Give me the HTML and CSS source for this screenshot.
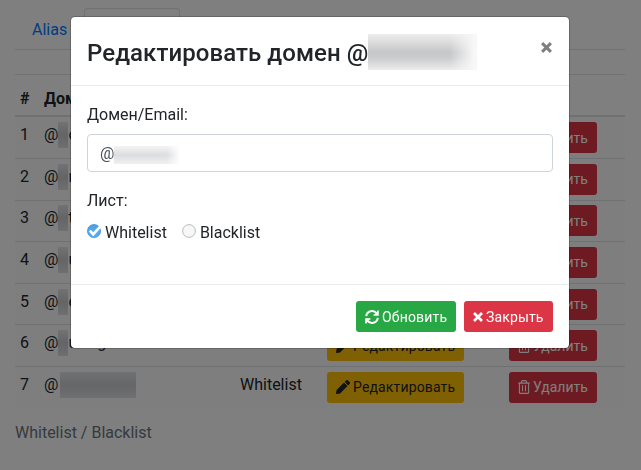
FILE: index.html
```html
<!DOCTYPE html>
<html lang="ru">
<head>
<meta charset="utf-8">
<title>Whitelist / Blacklist</title>
<link rel="stylesheet" href="styles.css">
</head>
<body>
<svg class="defs" aria-hidden="true">
  <symbol id="pencil" viewBox="0 0 512 512"><path fill="currentColor" d="M498 142l-46 46c-5 5-12 5-17 0L324 77c-5-5-5-12 0-17l46-46c19-19 49-19 68 0l60 60c19 19 19 49 0 68zM284 100L22 362 .4 484c-3 16 11 30 28 28L150 490l262-262c5-5 5-12 0-17L301 100c-5-5-13-5-17 0z"/></symbol>
  <symbol id="trash" viewBox="0 0 12 14"><path fill="none" stroke="currentColor" stroke-width="1.1" d="M.3 3.1h11.4M3.3 3V1.8L4.5.6h3l1.2 1.2V3M1.4 3.3v9.1q0 1 1 1h7.2q1 0 1-1V3.3M4.5 5.3v6M7.5 5.3v6"/></symbol>
  <symbol id="sync" viewBox="0 0 14 14"><path fill="none" stroke="currentColor" stroke-width="2" d="M1.2 6.2A5.8 5.8 0 0 1 11.7 3.6M12.8 7.8A5.8 5.8 0 0 1 2.3 10.4"/><path fill="currentColor" d="M13.8.5v5.3H8.5V4.6l2.1-.5L12.4.5zM.2 13.5V8.2h5.3v1.2l-2.1.5-1.8 3.6z"/></symbol>
  <symbol id="times" viewBox="0 0 10 10"><path fill="none" stroke="currentColor" stroke-width="2.7" d="M1 1l8 8M9 1L1 9"/></symbol>
</svg>

<main class="page">
  <nav class="tabs"><a class="tab">Alias</a><a class="tab tab-active"></a></nav>
  <hr class="rule">
  <table class="table">
    <colgroup><col class="c-num"><col class="c-domain"><col class="c-list"><col class="c-edit"><col class="c-del"></colgroup>
    <thead><tr><th>#</th><th>Домен</th><th></th><th></th><th></th></tr></thead>
    <tbody>
      <tr><td>1</td><td>@<span class="mask"></span>o</td><td></td><td><button class="btn warning"><svg class="icon"><use href="#pencil"/></svg></button></td><td><button class="btn danger remove"><svg class="icon trash"><use href="#trash"/></svg><span>Удалить</span></button></td></tr>
      <tr><td>2</td><td>@<span class="mask"></span>n</td><td></td><td><button class="btn warning"><svg class="icon"><use href="#pencil"/></svg></button></td><td><button class="btn danger remove"><svg class="icon trash"><use href="#trash"/></svg><span>Удалить</span></button></td></tr>
      <tr><td>3</td><td>@<span class="mask"></span>t</td><td></td><td><button class="btn warning"><svg class="icon"><use href="#pencil"/></svg></button></td><td><button class="btn danger remove"><svg class="icon trash"><use href="#trash"/></svg><span>Удалить</span></button></td></tr>
      <tr><td>4</td><td>@<span class="mask"></span>u</td><td></td><td><button class="btn warning"><svg class="icon"><use href="#pencil"/></svg></button></td><td><button class="btn danger remove"><svg class="icon trash"><use href="#trash"/></svg><span>Удалить</span></button></td></tr>
      <tr><td>5</td><td>@<span class="mask"></span>e</td><td></td><td><button class="btn warning"><svg class="icon"><use href="#pencil"/></svg></button></td><td><button class="btn danger remove"><svg class="icon trash"><use href="#trash"/></svg><span>Удалить</span></button></td></tr>
      <tr><td>6</td><td>@<span class="mask"></span>u<span class="tail">g</span></td><td></td><td><button class="btn warning"><svg class="icon"><use href="#pencil"/></svg><span>Редактировать</span></button></td><td><button class="btn danger remove"><svg class="icon trash"><use href="#trash"/></svg><span>Удалить</span></button></td></tr>
      <tr><td>7</td><td>@<span class="mask mask-long"></span></td><td>Whitelist</td><td><button class="btn warning"><svg class="icon"><use href="#pencil"/></svg><span>Редактировать</span></button></td><td><button class="btn danger remove"><svg class="icon trash"><use href="#trash"/></svg><span>Удалить</span></button></td></tr>
    </tbody>
  </table>
  <p class="caption">Whitelist / Blacklist</p>
</main>

<div class="backdrop">
  <section class="modal">
    <header class="modal-header">
      <h5 class="title">Редактировать домен @<span class="title-mask"></span></h5>
      <button class="close" aria-label="Закрыть"><svg class="icon-close"><use href="#times"/></svg></button>
    </header>
    <div class="modal-body">
      <label class="label">Домен/Email:</label>
      <div class="input">@<span class="input-mask"></span></div>
      <label class="label">Лист:</label>
      <div class="radios">
        <label class="radio"><svg class="dot" viewBox="0 0 14 14"><defs><linearGradient id="blue" x2="0" y2="1"><stop stop-color="#4b9fe6"/><stop offset="1" stop-color="#55b0ff"/></linearGradient></defs><circle cx="7" cy="7" r="6.6" fill="url(#blue)" stroke="#438fce" stroke-width=".7"/><path d="M2.8 6.6l3.4 3.6 6.8-7.4" fill="none" stroke="#fff" stroke-width="2.7"/></svg><span>Whitelist</span></label>
        <label class="radio"><svg class="dot" viewBox="0 0 14 14"><circle cx="7" cy="7" r="6.4" fill="#f7f7f7" stroke="#bbb" stroke-width="1"/></svg><span>Blacklist</span></label>
      </div>
    </div>
    <footer class="modal-footer">
      <button class="btn success"><svg class="icon"><use href="#sync"/></svg><span>Обновить</span></button>
      <button class="btn danger"><svg class="icon cross"><use href="#times"/></svg><span>Закрыть</span></button>
    </footer>
  </section>
</div>
</body>
</html>
```

FILE: styles.css
```css
* { box-sizing: border-box; }
html, body { height: 100%; overflow: hidden; }
body { margin: 0; background: #fff; color: #212529; font: 16px/24px Roboto, "Liberation Sans", sans-serif; }
.defs { position: absolute; width: 0; height: 0; }

.page { padding: 8px 16px 0 15px; }
.tabs { display: flex; height: 42px; border-bottom: 1px solid #dee2e6; }
.tab { padding: 10px 17px 7px; color: #007bff; }
.tab-active { width: 96px; border: 1px solid #dee2e6; border-bottom-color: #fff; border-radius: 4px 4px 0 0; }
.rule { height: 1px; margin: 24px 0 7.4px; border: 0; background: #e5e5e5; }

.table { width: 610px; table-layout: fixed; border-collapse: separate; border-spacing: 0; }
.c-num { width: 24px; }
.c-domain { width: 196px; }
.c-list { width: 87px; }
.c-edit { width: 182px; }
.table th { padding: 5px 5px 4px; height: 35px; border-bottom: 2px solid #dee2e6; font-weight: 700; text-align: left; }
.table td { height: 41.6px; padding: 5.8px 5px 3.8px; border-top: 1px solid #dee2e6; vertical-align: top; white-space: nowrap; }
.table tbody tr:first-child td { border-top: 0; height: 40.6px; }
.table tbody { background: #fdfdfd; }
.mask { display: inline-block; width: 10px; height: 26px; margin: -2px 0 -1px; vertical-align: -7px; background: linear-gradient(#e4e5e7, #c8c9cd 50%, #dedfe2); }
.tail { margin-left: 20px; }
.mask-long { width: 76px; margin-left: 2px; background: linear-gradient(#e2e3e5, #cbcdd0 50%, #dedfe1); }
.caption { margin: 13px 0 0; color: #6c757d; }

.btn { display: inline-flex; align-items: center; gap: 3px; height: 31px; padding: 0 9px; border: 0; border-radius: 3px; font: 14px/21px Roboto, "Liberation Sans", sans-serif; letter-spacing: .15px; color: #fff; white-space: nowrap; }
.btn span { padding-top: 1px; }
.table .btn { margin-top: -1px; vertical-align: top; }
.warning { width: 137px; background: #ffc107; color: #212529; }
.danger { width: 89px; background: #dc3545; }
.remove { width: 88px; letter-spacing: 0; }
.success { width: 100px; background: #28a745; letter-spacing: .2px; }
.icon { flex: none; width: 14px; height: 14px; }
.trash { width: 12px; }
.cross { width: 10px; height: 10px; }

.backdrop { position: fixed; inset: 0; background: rgba(0, 0, 0, .5); }
.modal { width: 500px; height: 333px; margin: 16px 0 0 70px; border: 1px solid rgba(0, 0, 0, .2); border-radius: 5px; background: #fff; background-clip: padding-box; }
.modal-header { display: flex; justify-content: space-between; height: 69px; padding: 16px; border-bottom: 1px solid #e9ecef; }
.title { display: flex; margin: 0; font-size: 24px; font-weight: 500; line-height: 40px; height: 36px; letter-spacing: .07px; }
.title-mask { width: 109px; height: 36px; margin-top: 1px; background: linear-gradient(90deg, transparent 75%, #f7f7f7 97%), linear-gradient(#ededed, #c6c7c8 50%, #cacbcc 65%, #ececec); }
.close { display: flex; padding: 9px 1px 0 0; border: 0; background: none; color: #7f7f7f; }
.icon-close { width: 11px; height: 11px; }
.modal-body { height: 198px; padding: 16px; }
.label { display: block; padding-top: 1px; margin-bottom: 7px; }
.input { display: flex; align-items: center; height: 38px; margin-bottom: 16px; padding: 1px 12px 0; border: 1px solid #ced4da; border-radius: 4px; color: #495057; }
.input-mask { width: 66px; height: 18px; margin-top: 2px; background: linear-gradient(90deg, transparent 0 80%, #fff 100%), linear-gradient(#f4f4f4, #dcddde 50%, #f0f0f0); }
.radios { display: flex; gap: 15px; }
.radio { display: flex; gap: 4px; }
.radio span { padding-top: 1px; }
.dot { width: 14px; height: 14px; margin-top: 4px; }
.modal-footer { display: flex; justify-content: flex-end; gap: 8px; padding: 16px; border-top: 1px solid #e9ecef; }
```
